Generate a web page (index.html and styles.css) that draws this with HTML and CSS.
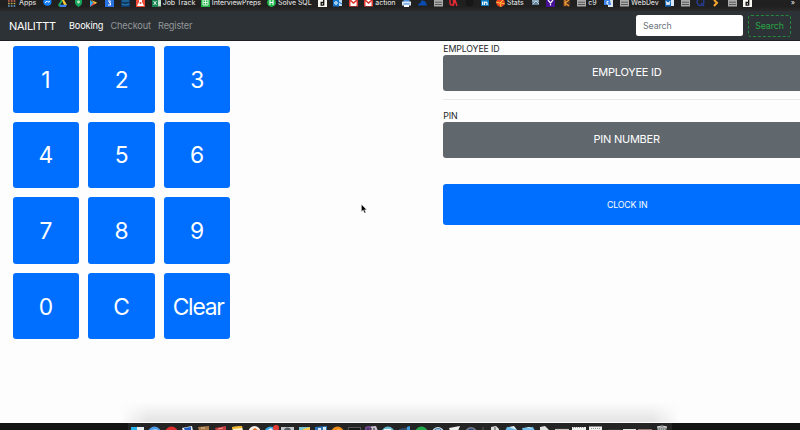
FILE: index.html
```
<!DOCTYPE html>
<html lang="en">
<head>
<meta charset="utf-8">
<title>NAILITTT</title>
<link rel="stylesheet" href="styles.css">
</head>
<body>
<svg width="0" height="0" class="defs">
  <symbol id="folder" viewBox="0 0 9 8"><path d="M0 0h9v6.5H0z" fill="#aaa"/><path d="M1 2.2h7M1 4.5h7" stroke="#444" stroke-width=".8"/></symbol>
  <symbol id="mail" viewBox="0 0 9 8"><path d="M0 0h9v6.5H0z" fill="#e23b35"/><path d="M1.5 0h6v6h-6z" fill="#fff"/><path d="M1 0l3.5 3L8 0" fill="none" stroke="#d92d29" stroke-width="1.4"/></symbol>
  <symbol id="letter-d" viewBox="0 0 9 8"><path d="M0 0h9v7H0z" fill="#f7f7ef"/><path d="M5.7 0v5.5M5.7 2.5H3.2v2.7h2.5" fill="none" stroke="#111" stroke-width="1.3"/></symbol>
  <symbol id="outlook" viewBox="0 0 9 8"><path d="M4 0h5v6H4z" fill="#bddaf3"/><path d="M0 0h6v6.5H0z" fill="#1475cc"/><circle cx="3" cy="3" r="1.3" fill="none" stroke="#fff"/><path d="M6 2l3 2" stroke="#1475cc"/></symbol>
</svg>
<div class="bookmarks">
  <span class="mark"><svg viewBox="0 0 9 8"><g stroke-width="1.7" stroke-dasharray="1.7 1.1"><path d="M0 1h8" stroke="#d66a55"/><path d="M0 3.5h8" stroke="#bda950"/><path d="M0 6h8" stroke="#659cca"/></g></svg><b class="apps">Apps</b></span>
  <span class="mark"><svg viewBox="0 0 9 8"><circle cx="4.4" cy="1.7" r="4.1" fill="#1681fa"/><path d="M2 2.8l2-1.6 1 1 2-1" fill="none" stroke="#fff"/></svg></span>
  <span class="mark"><svg viewBox="0 0 9 8"><path d="M3 0L0 5l1.4 2L5 0z" fill="#21a45d"/><path d="M4 0h2l3 5H6z" fill="#f9cd32"/><path d="M2.6 4.8H9L7.8 7H1.4z" fill="#3d7fea"/></svg></span>
  <span class="mark"><svg viewBox="0 0 9 8"><path d="M1 0h7v3q0 2-3.5 4Q1 5 1 3z" fill="#14a75b"/><circle cx="4.5" cy="2" r="1.4" fill="#c1ead0"/></svg></span>
  <span class="mark"><svg viewBox="0 0 9 8"><path d="M1 0v7l4-4z" fill="#34a9e8"/><path d="M1 7l7-4-3-1z" fill="#e94a42"/><path d="M2 0l6 2.500-2 1.500z" fill="#f5c337"/></svg></span>
  <span class="mark"><svg viewBox="0 0 9 8"><path d="M0 0h9v7H0z" fill="#2670df"/><path d="M3 1h2.500L4.300 2.800h1.200V5H3" fill="none" stroke="#fff"/></svg></span>
  <span class="mark"><svg viewBox="0 0 9 8"><path d="M0 0h9v7H0z" fill="#103b66"/><path d="M1 1h7M1 4q3.500 2 7 0" fill="none" stroke="#2b83ba" stroke-width="1.2"/></svg></span>
  <span class="mark"><svg viewBox="0 0 9 8"><path d="M0 0h9v7H0z" fill="#ef4935"/><path d="M3 0h3v2l2 4H1l2-4z" fill="#fff"/><circle cx="4.5" cy="3" r="1" fill="#ef4935"/></svg></span>
  <span class="mark"><svg viewBox="0 0 9 8"><path d="M4 0h5v6.500H4z" fill="#b9d8c2"/><path d="M0 0h6v7H0z" fill="#188350"/><path d="M1.500 1l3 4m0-4l-3 4M6 3h3" stroke="#e8fff0" stroke-width=".9"/></svg><b class="job">Job Track</b></span>
  <span class="mark"><svg viewBox="0 0 9 8"><path d="M0 0h9v7H0z" fill="#27b34b"/><path d="M2 0h5v5H2zM2 2.500h5M4.500 0v5" fill="none" stroke="#d8f6dc"/></svg><b class="interview">InterviewPreps</b></span>
  <span class="mark"><svg viewBox="0 0 9 8"><circle cx="4.5" cy="2.5" r="4.4" fill="#1eb64b"/><path d="M3 0v5M6 0v5M3 2.500h3" stroke="#fff" stroke-width="1.1"/></svg><b class="sql">Solve SQL</b></span>
  <span class="mark"><svg><use href="#letter-d"/></svg></span>
  <span class="mark"><svg><use href="#outlook"/></svg></span>
  <span class="mark"><svg><use href="#mail"/></svg></span>
  <span class="mark"><svg><use href="#mail"/></svg><b class="action">action</b></span>
  <span class="mark"><svg viewBox="0 0 9 8"><path d="M1.500 0h6v2h-6z" fill="#4a90e2"/><path d="M0 1.500h9v4H0z" fill="#d8e5f4"/><path d="M2 4h5v3H2z" fill="#fff"/><path d="M1.500 4h6" stroke="#327dd5"/></svg></span>
  <span class="mark"><svg viewBox="0 0 9 8"><path d="M0 5.500Q0 3 2.500 3 3-1 6 1q2 0 1.800 2Q9 3.500 9 5.500z" fill="#094bb0"/></svg></span>
  <span class="mark"><svg><use href="#folder"/></svg></span>
  <span class="mark"><svg viewBox="0 0 9 8"><path d="M1 0v3q0 2 1.800 2T4.500 3V0M4 6l2-6 2 6" fill="none" stroke="#e22935" stroke-width="1.5"/></svg></span>
  <span class="mark"><svg viewBox="0 0 9 8"><circle cx="4.5" cy="2.5" r="4" fill="#171717"/></svg></span>
  <span class="mark"><svg viewBox="0 0 9 8"><path d="M1 0h8v6H1z" fill="#0879be"/><path d="M2.700 1.500V5M4.500 5V1.500M4.500 3q2-2 2.500 0v2" fill="none" stroke="#fff" stroke-width="1.2"/></svg></span>
  <span class="mark"><svg viewBox="0 0 9 8"><circle cx="4.5" cy="2.5" r="4.3" fill="#e94624"/><path d="M0 2l4 1 3-3M4 3l1 4M5 3l4 1" fill="none" stroke="#ffc339"/></svg><b class="stats">Stats</b></span>
  <span class="mark"><svg viewBox="0 0 9 8"><path d="M1 0h7v5H1z" fill="#638096"/><path d="M1 1h7M2 4l3-3 3 3" fill="none" stroke="#b9d4df"/></svg></span>
  <span class="mark"><svg viewBox="0 0 9 8"><path d="M0 0h9v7H0z" fill="#461097"/><path d="M2 0l2.500 3L7 0M4.500 2.500V5.500" fill="none" stroke="#fff" stroke-width="1.2"/></svg></span>
  <span class="mark"><svg viewBox="0 0 9 8"><path d="M1 0h7v6.500H1z" fill="#583519"/><path d="M3 0v6M7 0L3 3l4 3" fill="none" stroke="#eb963c" stroke-width="1.3"/></svg></span>
  <span class="mark"><svg><use href="#folder"/></svg><b class="c9">c9</b></span>
  <span class="mark"><svg viewBox="0 0 9 8"><path d="M4 0h5v7H4z" fill="#dce5ec"/><path d="M0 0h6l1 5H0z" fill="#3d83ed"/><path d="M4.500 1.500H3V4h1.500" fill="none" stroke="#fff"/></svg></span>
  <span class="mark"><svg><use href="#folder"/></svg><b class="webdev">WebDev</b></span>
  <span class="mark"><svg viewBox="0 0 9 8"><path d="M5 0h4v6H5z" fill="#d9e9f7"/><path d="M0 0h6v6.500H0z" fill="#1866b4"/><path d="M1 1l1 4 1-3 1 3 1-4" fill="none" stroke="#fff" stroke-width=".9"/></svg></span>
  <span class="mark"><svg><use href="#folder"/></svg></span>
  <span class="mark"><svg viewBox="0 0 9 8"><circle cx="4.5" cy="2" r="3.4" fill="none" stroke="#263c94" stroke-width="1.5"/><path d="M5 3l3 3" stroke="#263c94" stroke-width="1.4"/></svg></span>
  <span class="mark"><svg viewBox="0 0 9 8"><path d="M2 0l3 2.700L2 6" fill="none" stroke="#f7a72f" stroke-width="2"/></svg></span>
  <span class="mark"><svg><use href="#folder"/></svg></span>
  <span class="mark"><svg><use href="#letter-d"/></svg></span>
  <b class="more">»</b>
</div>
<nav class="navbar">
  <span class="brand">NAILITTT</span>
  <span class="link active">Booking</span>
  <span class="link checkout">Checkout</span>
  <span class="link">Register</span>
  <input class="search" type="text" placeholder="Search">
  <button class="search-btn">Search</button>
</nav>
<main class="page">
  <div class="keypad">
    <button>1</button><button>2</button><button>3</button>
    <button>4</button><button>5</button><button>6</button>
    <button>7</button><button>8</button><button>9</button>
    <button>0</button><button>C</button><button class="clear">Clear</button>
  </div>
  <div class="form">
    <div class="label">EMPLOYEE ID</div>
    <div class="field">EMPLOYEE ID</div>
    <hr>
    <div class="label">PIN</div>
    <div class="field">PIN NUMBER</div>
    <button class="clock">CLOCK IN</button>
  </div>
</main>
<svg class="cursor" viewBox="0 0 6 10"><path d="M.5.4v7.1L2.2 6l1.3 3 1.2-.5-1.3-2.8h2.2z" fill="#000" stroke="#ddd" stroke-width=".4"/></svg>
<div class="shade"></div>
<footer class="dock">
<svg viewBox="0 0 800 8" width="800" height="8">
  <path d="M128 0h544v8H128z" fill="#242424"/>
  <path d="M131 4h13v4h-13z" fill="#e6edf2"/><path d="M131 4h6v4h-6z" fill="#24b5ef"/>
  <circle cx="154.5" cy="10" r="6.5" fill="#4a9bea"/><path d="M151 7l7-1-4 2z" fill="#d6e6f5"/>
  <circle cx="171.5" cy="10" r="6.5" fill="#dc302f"/><circle cx="171.5" cy="9" r="2" fill="#ffc1b8"/>
  <path d="M182 5l10-2 1 5h-10z" fill="#e7edf5"/><path d="M184 5l7-1v4h-6z" fill="#205fc1"/>
  <path d="M198 4l11-1v5h-10z" fill="#a57948"/><path d="M201 5h4" stroke="#ddc291"/>
  <path d="M215 5l11-2v5h-10z" fill="#c33e3e"/><path d="M218 6l5-1" stroke="#f39c91"/>
  <path d="M232 4l10-1 1 5h-10z" fill="#fff3ca"/><path d="M232 4l10-1v2l-10 1z" fill="#f0b324"/>
  <circle cx="254.5" cy="9" r="6" fill="#f5eee6"/><path d="M251 8l4-3 4 3z" fill="#e47125"/>
  <circle cx="270.5" cy="9.5" r="6" fill="#39a7df"/><path d="M266 8l5-3 3 3z" fill="#ebf4f7"/><circle cx="276" cy="5" r="3" fill="#e43b35"/>
  <path d="M281 4h13v4h-13z" fill="#c0c5c8"/><circle cx="287.5" cy="8" r="3.5" fill="#555d64"/>
  <path d="M299 4h11v4h-11z" fill="#79c7d0"/><path d="M303 6l7-2v4h-7z" fill="#f6ca55"/>
  <path d="M315 4l12-1v5h-12z" fill="#2c75b9"/><path d="M318 5h3v3h-3zM323 4h3v3h-3z" fill="#d7e7f5"/>
  <circle cx="337.5" cy="10" r="6.5" fill="#ed8b18"/><path d="M333 8l6-2 3 2z" fill="#ffb353"/>
  <path d="M348 4h13v4h-13z" fill="#555"/><path d="M349 5h11v3h-11z" fill="#171717"/>
  <path d="M365 4l11-1 2 5h-13z" fill="#c9c1d0"/><path d="M365 4l6-1v5h-6z" fill="#6e458f"/><path d="M367 6h8" stroke="#222" stroke-dasharray="2 1"/>
  <circle cx="388" cy="10" r="6.5" fill="#69bdd1"/><path d="M384 7h7" stroke="#f0f6f4" stroke-width="2"/>
  <path d="M399 6l10-2 1 4h-11z" fill="#354c67"/><path d="M407 4l3-1v5h-3z" fill="#3b9bdd"/>
  <circle cx="421.5" cy="10" r="6.5" fill="#22a84a"/>
  <circle cx="438" cy="10" r="6" fill="#d5e5ed"/><circle cx="438" cy="9" r="4" fill="#3d79a3"/><path d="M436 7h4" stroke="#fff"/>
  <path d="M449 5l11-2-2 5h-8z" fill="#eef0ef"/>
  <circle cx="471" cy="10" r="6" fill="#747985"/><circle cx="471" cy="9" r="3.5" fill="#29467e"/>
  <path d="M483 4v4" stroke="#555"/>
  <path d="M491 8V4l5-1 3 3v2z" fill="#dcdcdc"/><path d="M495 4v4" stroke="#555"/>
  <path d="M505 8l2-4h7l4 4z" fill="#68b9e5"/><path d="M509 4l5-1 3 4z" fill="#e2eef2"/>
  <path d="M522 5l11-1 2 4h-12z" fill="#70bee9"/><path d="M525 4h5l2 2z" fill="#bae0f2"/>
  <path d="M540 8V4l5-1 5 5z" fill="#e1e1e1"/>
  <path d="M555 6.5h14" stroke="#c7bfba" stroke-width="1.2"/>
  <path d="M572 4h14v4h-14zM589 3.5h13v4.5h-13z" fill="#f0f0f0"/><path d="M573 4.5h12M591 5.5h9" stroke="#999" stroke-dasharray="1 1"/>
  <path d="M608 7h12" stroke="#444"/><path d="M623 7h13" stroke="#e1e1e1" stroke-width="2"/><path d="M638 7h14" stroke="#b7998b" stroke-width="1.5"/>
  <path d="M657 4h10l-1 4h-8z" fill="#a5a9aa"/><path d="M657 4q5-2 10 0" fill="none" stroke="#e0e0e0"/><path d="M659 6h7" stroke="#5c6262" stroke-dasharray="1 1"/>
</svg>
</footer>
</body>
</html>
```
FILE: styles.css
```
* { box-sizing: border-box; }
html, body { height: 100%; }
body { margin: 0; overflow: hidden; display: flex; flex-direction: column; background: #fdfdfd; color: #212529; font-family: Inter, "Liberation Sans", sans-serif; }
button, input { font-family: inherit; margin: 0; }
.defs { position: absolute; }
.bookmarks { height: 11px; flex: none; display: flex; align-items: flex-start; gap: 6.6px; padding: 0 5px 0 8px; background: linear-gradient(#202020 60%, #2a2a2a); }
.mark { display: flex; flex: none; gap: 2px; height: 8px; }
.mark svg { width: 9px; height: 8px; flex: none; overflow: hidden; }
.bookmarks b { height: 8px; font-size: 7px; font-weight: 500; line-height: 6.6px; letter-spacing: -.08px; color: #d8d8d8; white-space: nowrap; }
.apps { width: 17px; }
.job { width: 31.5px; }
.interview { width: 48.5px; }
.sql { width: 33px; }
.action { width: 20.5px; }
.stats { width: 17px; }
.c9 { width: 9.5px; }
.webdev { width: 27.5px; }
.bookmarks .more { margin-left: auto; }
.navbar { height: 30px; flex: none; display: flex; align-items: center; padding: 0 9px; background: #2d3236; border-bottom: 1px solid #1c2024; }
.brand { width: 60px; font-size: 11px; letter-spacing: -.3px; color: #fff; }
.link { font-size: 9.2px; letter-spacing: -.15px; color: #93979a; }
.active { width: 41.5px; color: #fff; }
.checkout { width: 47.5px; }
.search { width: 107px; height: 21px; margin-left: auto; margin-right: 5px; padding: 0 7px; font-size: 8.8px; letter-spacing: -.1px; border: 0; border-radius: 2.5px; background: #fff; }
.search::placeholder { color: #6c757d; opacity: 1; }
.search-btn { width: 43px; height: 22px; padding: 0; font-size: 8.8px; letter-spacing: -.1px; color: #28a745; background: none; border: 1px dashed #24883d; border-radius: 3px; }
.page { flex: 1; min-height: 0; display: flex; justify-content: space-between; }
.keypad { display: grid; grid-template-columns: repeat(3, 66.6px); grid-auto-rows: 66.6px; gap: 9px; padding: 5px 0 0 12.7px; align-content: start; }
.keypad button { padding: 0; border: 0; border-radius: 3px; background: #006fff; color: #fff; font-size: 22.8px; text-align: center; }
.keypad .clear { padding-left: 2px; letter-spacing: -1.2px; }
.form { width: 356.7px; padding-top: 2px; }
.label { height: 12px; line-height: 12px; font-size: 8.8px; letter-spacing: -.15px; }
.field { height: 35.5px; line-height: 35.5px; padding-left: 10px; text-align: center; font-size: 11px; letter-spacing: -.25px; color: #fff; background: #60676d; border-radius: 3px 0 0 3px; }
hr { margin: 8.5px 0 10px; border: 0; border-top: 1px solid #e8e8e8; }
.clock { display: block; width: 100%; height: 41px; margin-top: 26.7px; padding: 0 0 0 11px; font-size: 8.8px; letter-spacing: -.15px; color: #fff; background: #006fff; border: 0; border-radius: 3px 0 0 3px; }
.cursor { position: absolute; left: 361px; top: 204px; width: 6px; height: 10px; }
.shade { position: absolute; left: 120px; top: 402px; width: 560px; height: 20px; background: linear-gradient(transparent, rgba(0, 0, 0, .1)); -webkit-mask-image: linear-gradient(90deg, transparent, #000 5%, #000 95%, transparent); mask-image: linear-gradient(90deg, transparent, #000 5%, #000 95%, transparent); }
.dock { height: 7.5px; flex: none; position: relative; background: #141414; }
.dock svg { display: block; }
```
